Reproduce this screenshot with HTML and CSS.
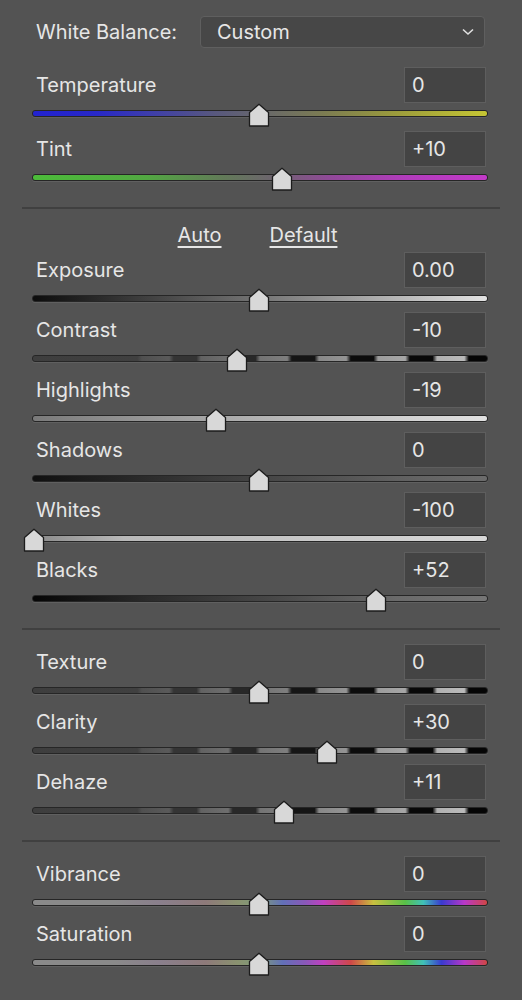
FILE: index.html
```html
<!DOCTYPE html>
<html lang="en">
<head>
  <meta charset="UTF-8">
  <title>Basic Panel</title>
  <link rel="stylesheet" href="styles.css">
</head>
<body>

<div class="panel">
  <div class="wb-row">
    <span class="wb-label">White Balance:</span>
    <div class="select">
      <span>Custom</span>
      <svg class="chevron" width="12" height="8" viewBox="0 0 12 8"><polyline points="1,1.5 6,6 11,1.5" fill="none" stroke="#e0e0e0" stroke-width="1.6"/></svg>
    </div>
  </div>

  <div class="group group-wb">
    <div class="row">
      <div class="head"><span class="label">Temperature</span><div class="value">0</div></div>
      <div class="slider">
        <div class="track track-temp"></div>
        <svg class="thumb" style="left: 216px" width="22" height="24" viewBox="0 0 22 24"><polygon points="1.5,23 1.5,9.5 11,1.2 20.5,9.5 20.5,23" /></svg>
      </div>
    </div>
    <div class="row row-tint">
      <div class="head"><span class="label">Tint</span><div class="value">+10</div></div>
      <div class="slider">
        <div class="track track-tint"></div>
        <svg class="thumb" style="left: 238.5px" width="22" height="24" viewBox="0 0 22 24"><polygon points="1.5,23 1.5,9.5 11,1.2 20.5,9.5 20.5,23" /></svg>
      </div>
    </div>
  </div>

  <hr class="sep">

  <div class="links">
    <a href="#">Auto</a>
    <a href="#">Default</a>
  </div>

  <div class="group">
    <div class="row">
      <div class="head"><span class="label">Exposure</span><div class="value">0.00</div></div>
      <div class="slider">
        <div class="track track-exposure"></div>
        <svg class="thumb" style="left: 216px" width="22" height="24" viewBox="0 0 22 24"><polygon points="1.5,23 1.5,9.5 11,1.2 20.5,9.5 20.5,23" /></svg>
      </div>
    </div>
    <div class="row">
      <div class="head"><span class="label">Contrast</span><div class="value">-10</div></div>
      <div class="slider">
        <div class="track track-bands"></div>
        <svg class="thumb" style="left: 193.5px" width="22" height="24" viewBox="0 0 22 24"><polygon points="1.5,23 1.5,9.5 11,1.2 20.5,9.5 20.5,23" /></svg>
      </div>
    </div>
    <div class="row">
      <div class="head"><span class="label">Highlights</span><div class="value">-19</div></div>
      <div class="slider">
        <div class="track track-highlights"></div>
        <svg class="thumb" style="left: 173px" width="22" height="24" viewBox="0 0 22 24"><polygon points="1.5,23 1.5,9.5 11,1.2 20.5,9.5 20.5,23" /></svg>
      </div>
    </div>
    <div class="row">
      <div class="head"><span class="label">Shadows</span><div class="value">0</div></div>
      <div class="slider">
        <div class="track track-shadows"></div>
        <svg class="thumb" style="left: 216px" width="22" height="24" viewBox="0 0 22 24"><polygon points="1.5,23 1.5,9.5 11,1.2 20.5,9.5 20.5,23" /></svg>
      </div>
    </div>
    <div class="row">
      <div class="head"><span class="label">Whites</span><div class="value">-100</div></div>
      <div class="slider">
        <div class="track track-whites"></div>
        <svg class="thumb" style="left: -9px" width="22" height="24" viewBox="0 0 22 24"><polygon points="1.5,23 1.5,9.5 11,1.2 20.5,9.5 20.5,23" /></svg>
      </div>
    </div>
    <div class="row">
      <div class="head"><span class="label">Blacks</span><div class="value">+52</div></div>
      <div class="slider">
        <div class="track track-blacks"></div>
        <svg class="thumb" style="left: 333px" width="22" height="24" viewBox="0 0 22 24"><polygon points="1.5,23 1.5,9.5 11,1.2 20.5,9.5 20.5,23" /></svg>
      </div>
    </div>
  </div>

  <hr class="sep">

  <div class="group">
    <div class="row">
      <div class="head"><span class="label">Texture</span><div class="value">0</div></div>
      <div class="slider">
        <div class="track track-bands"></div>
        <svg class="thumb" style="left: 216px" width="22" height="24" viewBox="0 0 22 24"><polygon points="1.5,23 1.5,9.5 11,1.2 20.5,9.5 20.5,23" /></svg>
      </div>
    </div>
    <div class="row">
      <div class="head"><span class="label">Clarity</span><div class="value">+30</div></div>
      <div class="slider">
        <div class="track track-bands"></div>
        <svg class="thumb" style="left: 283.5px" width="22" height="24" viewBox="0 0 22 24"><polygon points="1.5,23 1.5,9.5 11,1.2 20.5,9.5 20.5,23" /></svg>
      </div>
    </div>
    <div class="row">
      <div class="head"><span class="label">Dehaze</span><div class="value">+11</div></div>
      <div class="slider">
        <div class="track track-bands"></div>
        <svg class="thumb" style="left: 240.75px" width="22" height="24" viewBox="0 0 22 24"><polygon points="1.5,23 1.5,9.5 11,1.2 20.5,9.5 20.5,23" /></svg>
      </div>
    </div>
  </div>

  <hr class="sep">

  <div class="group">
    <div class="row">
      <div class="head"><span class="label">Vibrance</span><div class="value">0</div></div>
      <div class="slider">
        <div class="track track-color"></div>
        <svg class="thumb" style="left: 216px" width="22" height="24" viewBox="0 0 22 24"><polygon points="1.5,23 1.5,9.5 11,1.2 20.5,9.5 20.5,23" /></svg>
      </div>
    </div>
    <div class="row">
      <div class="head"><span class="label">Saturation</span><div class="value">0</div></div>
      <div class="slider">
        <div class="track track-color"></div>
        <svg class="thumb" style="left: 216px" width="22" height="24" viewBox="0 0 22 24"><polygon points="1.5,23 1.5,9.5 11,1.2 20.5,9.5 20.5,23" /></svg>
      </div>
    </div>
  </div>
</div>

</body>
</html>
```

FILE: styles.css
```css
* {
  box-sizing: border-box;
}

body {
  margin: 0;
  background: #535353;
  color: #e6e6e6;
  font-family: 'Inter', 'Liberation Sans', sans-serif;
  font-size: 20px;
}

.panel {
  padding: 16px 22px 0 22px;
}

.wb-row {
  display: flex;
  align-items: center;
  height: 32px;
  margin: 0 15px 0 14px;
}

.wb-label {
  width: 164px;
}

.select {
  flex: 1;
  height: 32px;
  display: flex;
  align-items: center;
  justify-content: space-between;
  padding: 0 10px 0 16px;
  background: #474747;
  border: 1px solid #5f5f5f;
  border-radius: 4px;
}

.group {
  margin: 0 12px 0 10px;
}

.group-wb {
  margin-top: 19px;
}

.row-tint {
  margin-top: 4px;
}

.head {
  display: flex;
  align-items: center;
  justify-content: space-between;
  height: 36px;
  padding: 0 2px 0 4px;
}

.value {
  width: 82px;
  height: 36px;
  line-height: 34px;
  padding-left: 7px;
  background: #444444;
  border: 1px solid #5e5e5e;
}

.slider {
  position: relative;
  height: 24px;
  padding-top: 7px;
}

.track {
  height: 7px;
  border: 1px solid #262626;
  border-radius: 3px;
  box-shadow: 0 1px 0 rgba(255, 255, 255, 0.08);
}

.thumb {
  position: absolute;
  top: 0;
}

.thumb polygon {
  fill: #d8d8d8;
  stroke: #1c1c1c;
  stroke-width: 1.3;
  stroke-linejoin: round;
}

.track-temp {
  background: linear-gradient(90deg, #2222d0 0%, #2828c8 14%, #3e3eaa 26%, #58587e 40%, #6a6a68 52%, #7c7c52 64%, #9c9c3c 80%, #c6c634 100%);
}

.track-tint {
  background: linear-gradient(90deg, #4cbc3a 0%, #52a842 25%, #627a58 42%, #6c666c 52%, #92489a 66%, #b23cbc 82%, #c23ac8 100%);
}

.track-exposure {
  background: linear-gradient(90deg, #0c0c0c 0%, #4a4a4a 30%, #8a8a8a 60%, #e2e2e2 100%);
}

.track-highlights {
  background: linear-gradient(90deg, #7a7a7a 0%, #a8a8a8 40%, #d0d0d0 80%, #e0e0e0 100%);
}

.track-shadows {
  background: linear-gradient(90deg, #101010 0%, #3c3c3c 40%, #606060 80%, #6c6c6c 100%);
}

.track-whites {
  background: linear-gradient(90deg, #8a8a8a 0%, #b8b8b8 20%, #c8c8c8 60%, #d8d8d8 100%);
}

.track-blacks {
  background: linear-gradient(90deg, #050505 0%, #2a2a2a 25%, #4a4a4a 55%, #6a6a6a 80%, #767676 100%);
}

.track-bands {
  background: linear-gradient(90deg,
    #3e3e3e 0%, #404040 23%,
    #505050 24%, #5a5a5a 30%,
    #343434 31%, #343434 36%,
    #626262 37%, #6e6e6e 43%,
    #282828 44%, #282828 49%,
    #747474 50%, #7e7e7e 56%,
    #151515 57%, #151515 62%,
    #888888 63%, #949494 69%,
    #0c0c0c 70%, #0c0c0c 75%,
    #9c9c9c 76%, #a6a6a6 82%,
    #080808 83%, #080808 88%,
    #b0b0b0 89%, #bababa 95%,
    #050505 96%, #050505 100%);
}

.track-color {
  background: linear-gradient(90deg, #8a8a8a 0%, #8a8a8a 18%, #8a7f8c 28%, #8e7a7a 38%, #8a9270 45%, #7e9a7a 50%, #6270b8 55%, #8a58b8 60%, #c040c0 64%, #d04848 70%, #c8c040 75%, #58c048 82%, #40c0b8 86%, #3a3ad0 90%, #b838c8 95%, #d04646 100%);
}

.sep {
  border: 0;
  height: 2px;
  background: #404040;
  margin: 16px 0 0 0;
}

.sep + .group {
  margin-top: 14px;
}

.links {
  display: flex;
  justify-content: center;
  gap: 48px;
  height: 43px;
  padding-top: 14px;
  padding-right: 7px;
}

.links a {
  color: #e6e6e6;
  text-decoration: underline;
  text-underline-offset: 4px;
}
```
